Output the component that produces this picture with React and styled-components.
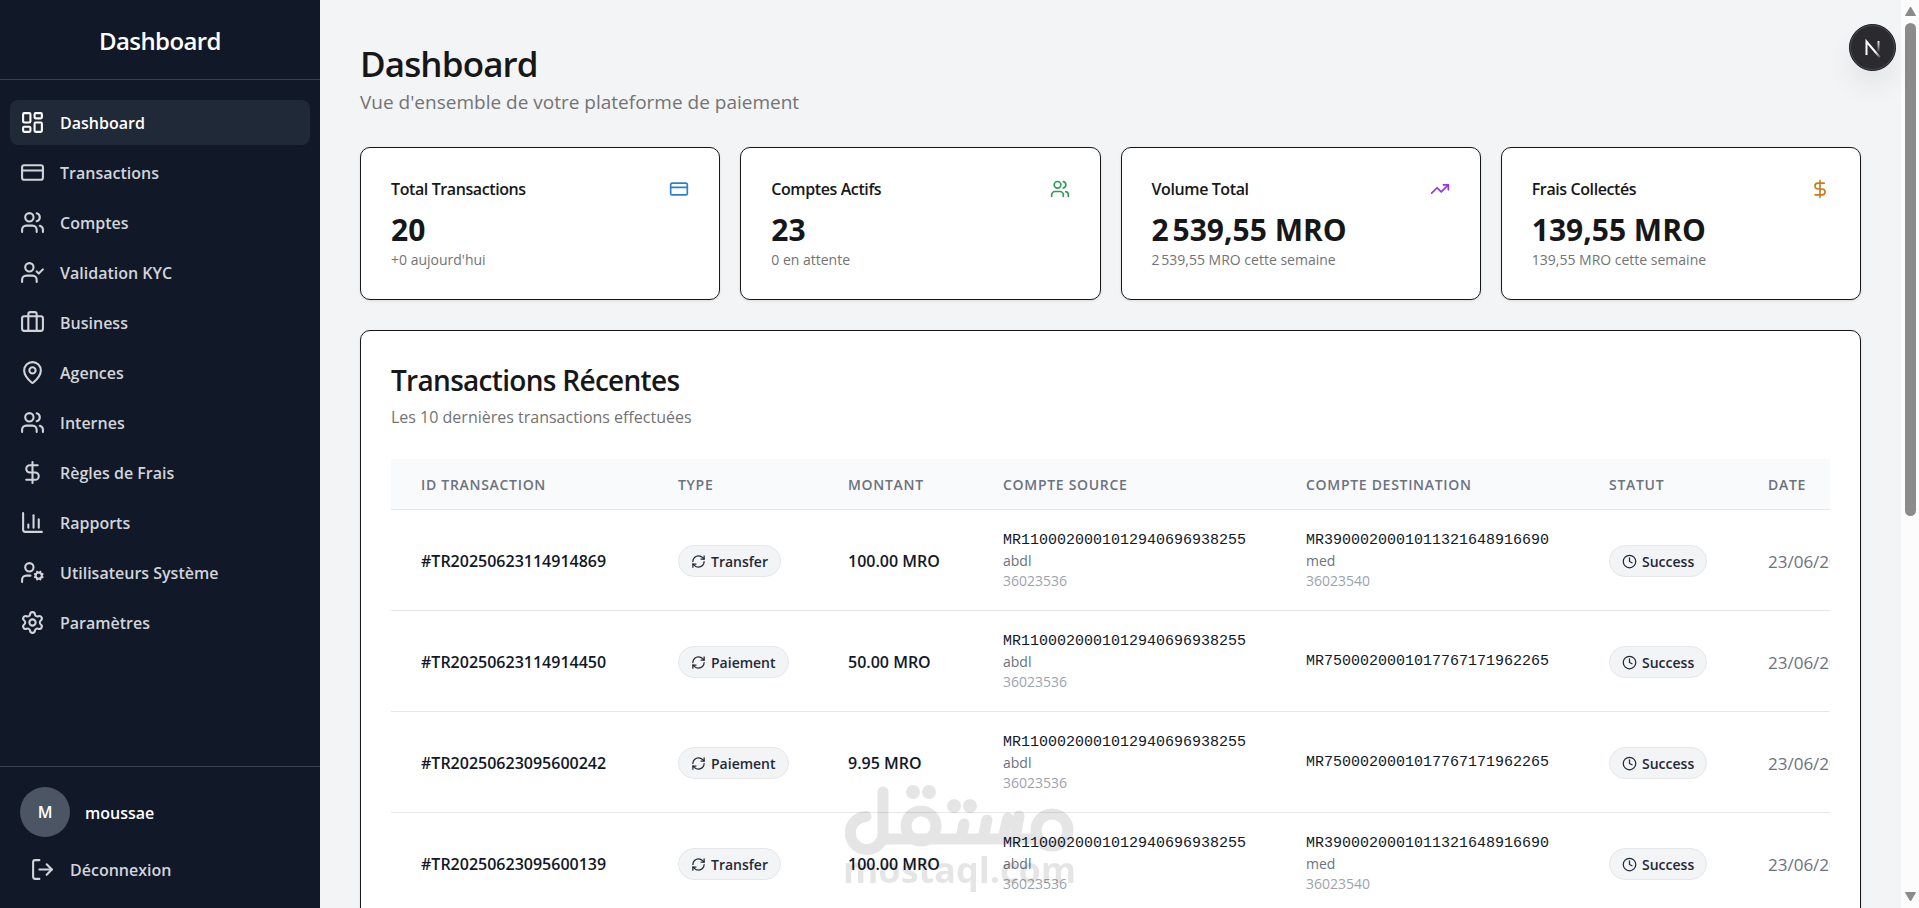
import React from 'react'
import styled, { createGlobalStyle } from 'styled-components'
import {
    LayoutDashboard, CreditCard, Users, UserCheck, Briefcase, MapPin, DollarSign,
    ChartColumn, UserCog, Settings, LogOut, TrendingUp, RefreshCw, Clock
} from 'lucide-react'

const GlobalStyle = createGlobalStyle`
    * {
        box-sizing: border-box;
    }

    body {
        margin: 0;
        font-family: "Open Sans", "Noto Sans", sans-serif;
        font-size: 16px;
        line-height: 25px;
        color: #171717;
    }
`

const Shell = styled.div`
    display: grid;
    grid-template-columns: 320px minmax(0, 1fr) 18px;
    height: 100vh;
    overflow: hidden;
    background: #f3f4f6;
`

const Sidebar = styled.aside`
    display: flex;
    flex-direction: column;
    min-height: 0;
    background: #111827;
    color: #fff;
`

const Brand = styled.div`
    display: flex;
    align-items: center;
    justify-content: center;
    height: 80px;
    padding-top: 2px;
    border-bottom: 1px solid #374151;
    font-size: 24px;
    font-weight: 600;
    letter-spacing: -0.025em;
`

const Nav = styled.nav`
    display: flex;
    flex: 1;
    flex-direction: column;
    gap: 5px;
    padding: 20px 10px;
`

const NavLink = styled.a`
    display: flex;
    align-items: center;
    gap: 15px;
    height: 45px;
    padding: 0 10px;
    border-radius: 8px;
    font-weight: 600;
    line-height: 27px;
    text-decoration: none;
    color: ${props => props.$active ? '#fff' : '#d1d5db'};
    background: ${props => props.$active ? '#1f2937' : 'transparent'};
`

const Label = styled.span`
    padding-top: 2px;
`

const Account = styled.div`
    padding: 20px 20px 16px;
    border-top: 1px solid #374151;
`

const User = styled.div`
    display: flex;
    align-items: center;
    gap: 15px;
    font-weight: 600;
`

const Avatar = styled.span`
    display: flex;
    align-items: center;
    justify-content: center;
    width: 50px;
    height: 50px;
    border-radius: 50%;
    background: #4b5563;
`

const LogoutButton = styled.button`
    display: flex;
    align-items: center;
    gap: 15px;
    width: 100%;
    height: 45px;
    margin-top: 10px;
    padding: 0 10px;
    border: 0;
    background: none;
    color: #d1d5db;
    font: inherit;
    font-weight: 600;
    cursor: pointer;
`

const Main = styled.main`
    min-height: 0;
    padding: 40px;
    overflow-y: auto;
    scrollbar-width: none;
`

const Title = styled.h1`
    margin: 0;
    font-size: 35px;
    line-height: 47px;
    font-weight: 600;
    letter-spacing: -0.025em;
`

const Subtitle = styled.p`
    margin: 0 0 30px;
    font-size: 19px;
    line-height: 30px;
    color: #737373;
`

const Stats = styled.div`
    display: grid;
    grid-template-columns: repeat(4, minmax(0, 1fr));
    gap: 20px;
    margin-bottom: 30px;
`

const Card = styled.section`
    padding: 30px;
    border: 1px solid #171717;
    border-radius: 10px;
    background: #fff;
    box-shadow: 0 1px 3px rgba(0, 0, 0, 0.1);
`

const StatHead = styled.div`
    display: flex;
    align-items: center;
    justify-content: space-between;
    margin-bottom: 10px;
`

const StatTitle = styled.h2`
    margin: 0;
    font-size: 16px;
    line-height: 22px;
    font-weight: 600;
    letter-spacing: -0.025em;
`

const StatValue = styled.div`
    font-size: 30px;
    line-height: 40px;
    font-weight: 700;
`

const StatNote = styled.p`
    margin: 0;
    font-size: 14px;
    line-height: 19px;
    color: #737373;
`

const PanelTitle = styled.h2`
    margin: 0 0 6px;
    font-size: 28px;
    line-height: 38px;
    font-weight: 600;
    letter-spacing: -0.025em;
`

const PanelNote = styled.p`
    margin: 0 0 29px;
    color: #737373;
`

const TableWrap = styled.div`
    overflow-x: auto;
    scrollbar-width: none;
`

const Table = styled.table`
    width: 1600px;
    table-layout: fixed;
    border-collapse: separate;
    border-spacing: 0;
`

const Col = styled.col`
    width: ${props => props.$width}px;
`

const Th = styled.th`
    height: 51px;
    padding: 2px 30px 0;
    border-bottom: 1px solid #e5e7eb;
    background: #f9fafb;
    color: #6b7280;
    font-size: 14px;
    line-height: 20px;
    font-weight: 600;
    letter-spacing: 0.05em;
    text-align: left;
    white-space: nowrap;
`

const Td = styled.td`
    height: 101px;
    padding: 21px 30px 19px;
    border-bottom: 1px solid #e5e7eb;
    color: ${props => props.$muted ? '#6b7280' : '#111827'};
    font-size: ${props => props.$muted ? 17 : 16}px;
    font-weight: ${props => props.$strong ? 600 : 400};
    white-space: nowrap;
`

const AccountNumber = styled.div`
    font-family: "Liberation Mono", monospace;
    font-size: 15px;
    line-height: 20px;
`

const Holder = styled.div`
    font-size: 14px;
    line-height: 20px;
    color: ${props => props.$light ? '#9ca3af' : '#6b7280'};
`

const Badge = styled.span`
    display: inline-flex;
    align-items: center;
    gap: 5px;
    height: 32px;
    padding: 0 12px;
    border: 1px solid #e5e7eb;
    border-radius: 16px;
    background: #f3f4f6;
    color: #1f2937;
    font-size: 14px;
    font-weight: 600;
    vertical-align: middle;
`

const Scrollbar = styled.div`
    display: flex;
    flex-direction: column;
    align-items: center;
    padding: 6px 0;
    background: #fcfcfc;
`

const Thumb = styled.div`
    width: 11px;
    height: 55%;
    margin: 7px 0 auto;
    border-radius: 6px;
    background: #8b8b8b;
`

const DevButton = styled.button`
    position: fixed;
    top: 24px;
    right: 23px;
    width: 47px;
    height: 47px;
    padding: 0;
    border: 0;
    border-radius: 50%;
    background: none;
    box-shadow: 0 16px 32px -8px rgba(0, 0, 0, 0.14);
`

const Watermark = styled.svg`
    position: fixed;
    left: 843px;
    bottom: 14px;
    opacity: 0.1;
    pointer-events: none;
`

const links = [
    { label: 'Dashboard', icon: LayoutDashboard },
    { label: 'Transactions', icon: CreditCard },
    { label: 'Comptes', icon: Users },
    { label: 'Validation KYC', icon: UserCheck },
    { label: 'Business', icon: Briefcase },
    { label: 'Agences', icon: MapPin },
    { label: 'Internes', icon: Users },
    { label: 'Règles de Frais', icon: DollarSign },
    { label: 'Rapports', icon: ChartColumn },
    { label: 'Utilisateurs Système', icon: UserCog },
    { label: 'Paramètres', icon: Settings }
]

const stats = [
    { title: 'Total Transactions', value: '20', note: "+0 aujourd'hui", icon: CreditCard, color: '#2b7fd9' },
    { title: 'Comptes Actifs', value: '23', note: '0 en attente', icon: Users, color: '#2a9d57' },
    { title: 'Volume Total', value: '2\u202f539,55 MRO', note: '2\u202f539,55 MRO cette semaine', icon: TrendingUp, color: '#9333ea' },
    { title: 'Frais Collectés', value: '139,55 MRO', note: '139,55 MRO cette semaine', icon: DollarSign, color: '#ca7a1c' }
]

const abdl = { number: 'MR1100020001012940696938255', name: 'abdl', phone: '36023536' }
const med = { number: 'MR3900020001011321648916690', name: 'med', phone: '36023540' }
const shop = { number: 'MR7500020001017767171962265' }

const transactions = [
    { id: '#TR20250623114914869', type: 'Transfer', amount: '100.00 MRO', from: abdl, to: med },
    { id: '#TR20250623114914450', type: 'Paiement', amount: '50.00 MRO', from: abdl, to: shop },
    { id: '#TR20250623095600242', type: 'Paiement', amount: '9.95 MRO', from: abdl, to: shop },
    { id: '#TR20250623095600139', type: 'Transfer', amount: '100.00 MRO', from: abdl, to: med }
]

const columns = [
    { label: 'ID TRANSACTION', width: 257 },
    { label: 'TYPE', width: 170 },
    { label: 'MONTANT', width: 155 },
    { label: 'COMPTE SOURCE', width: 303 },
    { label: 'COMPTE DESTINATION', width: 303 },
    { label: 'STATUT', width: 159 },
    { label: 'DATE', width: 253 }
]

const AccountCell = ({ account }) => (
    <Td>
        <AccountNumber>{account.number}</AccountNumber>
        {account.name && <Holder>{account.name}</Holder>}
        {account.phone && <Holder $light>{account.phone}</Holder>}
    </Td>
)

const Arrow = ({ down }) => (
    <svg width="13" height="10" viewBox="0 0 13 10" aria-hidden="true">
        <path d={down ? 'M1.5 .5h10L6.5 9z' : 'M1.5 9.5h10L6.5 1z'} fill="#8b8b8b" stroke="#8b8b8b" strokeLinejoin="round" />
    </svg>
)

const DevIndicator = () => (
    <DevButton aria-label="Next.js">
        <svg width="47" height="47" viewBox="0 0 47 47">
            <defs>
                <linearGradient id="leg" x1="0" y1="16" x2="0" y2="29" gradientUnits="userSpaceOnUse">
                    <stop offset="0" stopColor="#fff" />
                    <stop offset="1" stopColor="#fff" stopOpacity="0" />
                </linearGradient>
                <linearGradient id="diag" x1="19" y1="18" x2="32" y2="34" gradientUnits="userSpaceOnUse">
                    <stop offset="0.6" stopColor="#fff" />
                    <stop offset="1" stopColor="#fff" stopOpacity="0" />
                </linearGradient>
            </defs>
            <circle cx="23.5" cy="23.5" r="23" fill="#2b2b2f" stroke="#131316" />
            <circle cx="23.5" cy="23.5" r="22" fill="none" stroke="#4a4a50" />
            <path d="M17.5 31V17.5L31 33.5" fill="none" stroke="url(#diag)" strokeWidth="2" />
            <path d="M29.5 17v11" fill="none" stroke="url(#leg)" strokeWidth="2" />
        </svg>
    </DevButton>
)

const MostaqlMark = () => (
    <Watermark width="236" height="110" viewBox="0 0 236 110" aria-hidden="true">
        <g fill="none" stroke="#000" strokeWidth="11" strokeLinecap="round" strokeLinejoin="round">
            <path d="M23 32.5A16.5 16.5 0 1 0 40 52V8M37 58Q40 55 50 55H196" />
            <circle cx="78" cy="42" r="15" />
            <circle cx="209" cy="46" r="16" />
            <path d="M118 54l3-14M140 54l4-18M160 54l5-20M172 54l4-22" />
        </g>
        <g fill="#000">
            <circle cx="70" cy="8" r="7" />
            <circle cx="86" cy="8" r="7" />
            <circle cx="111" cy="22" r="7" />
            <circle cx="127" cy="22" r="7" />
        </g>
        <text x="0" y="99" fontFamily="Open Sans, sans-serif" fontWeight="700" fontSize="36">mostaql.com</text>
    </Watermark>
)

class App extends React.Component {
    constructor() {
        super();
        this.state = {
            active: 'Dashboard'
        }
    }

    select = (event, label) => {
        event.preventDefault()
        this.setState({ active: label })
    }

    render() {
        return (
            <Shell>
                <GlobalStyle />
                <Sidebar>
                    <Brand>Dashboard</Brand>
                    <Nav>
                        {links.map(({ label, icon: Icon }) => (
                            <NavLink
                                key={label}
                                href="#"
                                $active={label === this.state.active}
                                onClick={(event) => this.select(event, label)}
                            >
                                <Icon size={25} />
                                <Label>{label}</Label>
                            </NavLink>
                        ))}
                    </Nav>
                    <Account>
                        <User><Avatar>M</Avatar><Label>moussae</Label></User>
                        <LogoutButton type="button"><LogOut size={25} /><Label>Déconnexion</Label></LogoutButton>
                    </Account>
                </Sidebar>

                <Main>
                    <Title>Dashboard</Title>
                    <Subtitle>Vue d'ensemble de votre plateforme de paiement</Subtitle>
                    <Stats>
                        {stats.map(({ title, value, note, icon: Icon, color }) => (
                            <Card key={title}>
                                <StatHead>
                                    <StatTitle>{title}</StatTitle>
                                    <Icon size={20} color={color} />
                                </StatHead>
                                <StatValue>{value}</StatValue>
                                <StatNote>{note}</StatNote>
                            </Card>
                        ))}
                    </Stats>

                    <Card>
                        <PanelTitle>Transactions Récentes</PanelTitle>
                        <PanelNote>Les 10 dernières transactions effectuées</PanelNote>
                        <TableWrap>
                            <Table>
                                <colgroup>
                                    {columns.map(column => <Col key={column.label} $width={column.width} />)}
                                </colgroup>
                                <thead>
                                    <tr>
                                        {columns.map(column => <Th key={column.label} scope="col">{column.label}</Th>)}
                                    </tr>
                                </thead>
                                <tbody>
                                    {transactions.map(row => (
                                        <tr key={row.id}>
                                            <Td $strong>{row.id}</Td>
                                            <Td><Badge><RefreshCw size={15} />{row.type}</Badge></Td>
                                            <Td $strong>{row.amount}</Td>
                                            <AccountCell account={row.from} />
                                            <AccountCell account={row.to} />
                                            <Td><Badge><Clock size={15} />Success</Badge></Td>
                                            <Td $muted>23/06/2025</Td>
                                        </tr>
                                    ))}
                                </tbody>
                            </Table>
                        </TableWrap>
                    </Card>
                </Main>

                <Scrollbar>
                    <Arrow />
                    <Thumb />
                    <Arrow down />
                </Scrollbar>
                <DevIndicator />
                <MostaqlMark />
            </Shell>
        )
    }
}

export default App
